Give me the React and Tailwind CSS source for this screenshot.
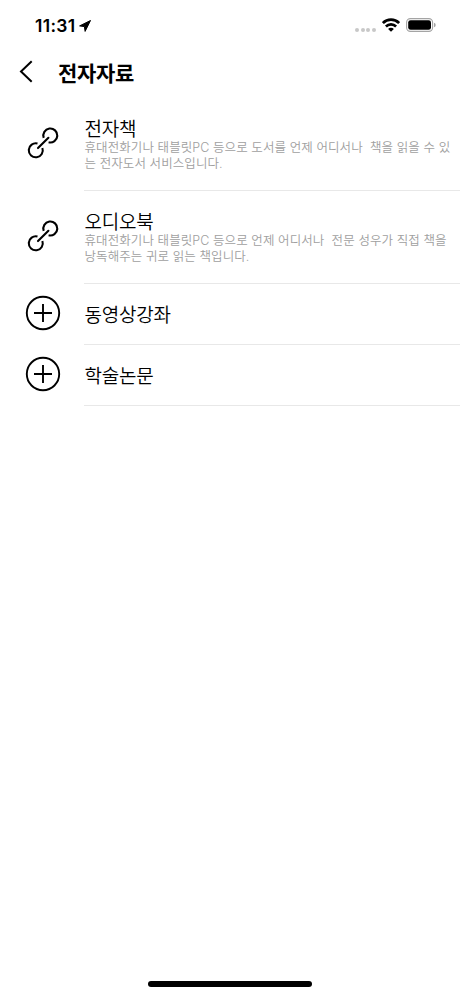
import React from 'react';

const ITEMS = [
  {
    title: '전자책',
    icon: 'link',
    lines: ['휴대전화기나 태블릿PC 등으로 도서를 언제 어디서나  책을 읽을 수 있', '는 전자도서 서비스입니다.'],
    row: 'h-[93px]',
  },
  {
    title: '오디오북',
    icon: 'link',
    lines: ['휴대전화기나 태블릿PC 등으로 언제 어디서나  전문 성우가 직접 책을', '낭독해주는 귀로 읽는 책입니다.'],
    row: 'h-[93px]',
  },
  { title: '동영상강좌', icon: 'plus', row: 'h-[61px]' },
  { title: '학술논문', icon: 'plus', row: 'h-[61px]' },
];

const LinkIcon = () => (
  <svg width="36" height="36" viewBox="0 0 36 36" fill="none" stroke="#000" strokeWidth="2.1">
    <path d="M18.7 12.8 A7 7 0 1 1 23.6 17.3" />
    <path d="M17.4 23 A7 7 0 1 1 12.5 18.5" />
    <path d="M13 23.1 L23.4 12.8" strokeLinecap="round" />
  </svg>
);

const PlusIcon = () => (
  <svg width="36" height="36" viewBox="0 0 36 36" fill="none" stroke="#000" strokeWidth="1.9">
    <circle cx="18" cy="18" r="16.2" />
    <path d="M18 9v18M9 18h18" />
  </svg>
);

const StatusBar = () => (
  <div className="h-[50px] shrink-0 flex items-center pl-[35px] pr-[24px]">
    <span className="mt-[2px] font-['Inter'] text-[17.5px] leading-[20px] font-semibold tracking-[0.3px]">11:31</span>
    <svg className="ml-[4px] mt-[1px]" width="12" height="12" viewBox="0 0 12 12">
      <path d="M11.5 0.5 L0.6 5.9 L5.4 6.6 L6.1 11.4 Z" fill="#000" stroke="#000" strokeWidth="1" strokeLinejoin="round" />
    </svg>
    <div className="ml-auto flex items-center">
      <div className="flex gap-[1.7px] mt-[9px] mr-[6px]">
        {[0, 1, 2, 3].map((i) => (
          <span key={i} className="size-[4px] rounded-full bg-[#c8c8c8]" />
        ))}
      </div>
      <svg className="mr-[6px]" width="18" height="14" viewBox="0 0 18 14" fill="none" stroke="#000">
        <path d="M0.9 5.1 A11.3 11.3 0 0 1 17.1 5.1" strokeWidth="2.7" />
        <path d="M3.9 8.5 A7.1 7.1 0 0 1 14.1 8.5" strokeWidth="2.6" />
        <path d="M9 13.8 L6.1 11 A3.9 3.9 0 0 1 11.9 11 Z" fill="#000" stroke="none" />
      </svg>
      <svg width="30" height="14" viewBox="0 0 30 14">
        <rect x="0.6" y="0.6" width="26" height="12.8" rx="3.8" fill="none" stroke="#a4a4a4" strokeWidth="1.1" />
        <rect x="2.2" y="2.2" width="22.8" height="9.6" rx="2.4" fill="#000" />
        <path d="M28 4.8 Q29.7 5.3 29.7 7 Q29.7 8.7 28 9.2 Z" fill="#a4a4a4" />
      </svg>
    </div>
  </div>
);

const App = () => (
  <div className="w-[460px] h-[996px] bg-white text-black flex flex-col overflow-hidden font-['Noto_Sans_CJK_KR',sans-serif]">
    <StatusBar />

    {/* Header */}
    <header className="h-[48px] shrink-0 flex items-start pl-[19px]">
      <svg className="mt-[10px]" width="14" height="23" viewBox="0 0 14 23" fill="none" stroke="#000" strokeWidth="2">
        <path d="M12.7 1.3 L2 11.5 L12.7 21.7" />
      </svg>
      <h1 className="ml-[25px] mt-[7px] text-[21px] leading-[30px] font-bold tracking-[-0.3px]">전자자료</h1>
    </header>

    {/* List */}
    <ul className="flex-1">
      {ITEMS.map((item) => (
        <li key={item.title} className={`flex ${item.row}`}>
          <div className={`w-[84px] pl-[25px] shrink-0 flex items-start ${item.lines ? 'pt-[27px]' : 'pt-[11px]'}`}>
            {item.icon === 'link' ? <LinkIcon /> : <PlusIcon />}
          </div>
          <div className="flex-1 border-b border-[#e8e8e8] flex flex-col pt-[18px] pl-[0.5px]">
            <h2 className="text-[19px] leading-[24px] font-[350] tracking-[-0.2px] whitespace-nowrap">{item.title}</h2>
            {item.lines?.map((line) => (
              <p key={line} className="font-['Inter','Noto_Sans_CJK_KR',sans-serif] text-[12.5px] leading-[16px] tracking-[0.08px] text-[#a0a0a0] font-[350] whitespace-pre">
                {line}
              </p>
            ))}
          </div>
        </li>
      ))}
    </ul>

    {/* Home indicator */}
    <div className="h-[15px] shrink-0 flex justify-center">
      <div className="w-[164px] h-[6px] rounded-full bg-black" />
    </div>
  </div>
);

export default App;
